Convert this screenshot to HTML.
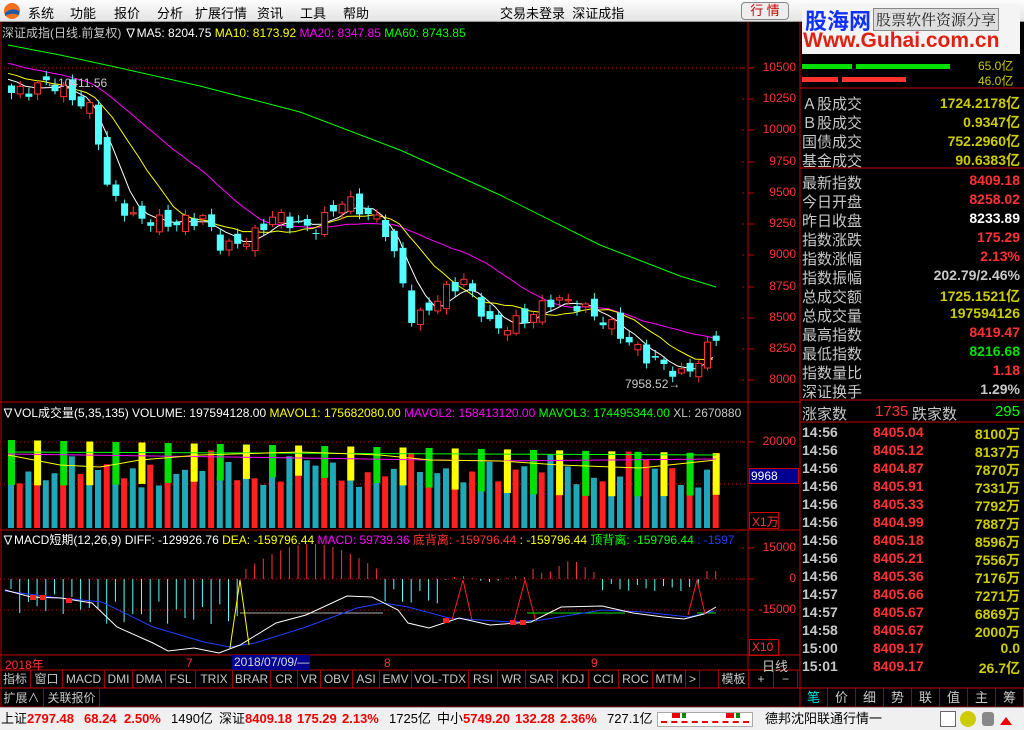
<!DOCTYPE html>
<html><head><meta charset="utf-8">
<style>
*{margin:0;padding:0;box-sizing:border-box}
body{width:1024px;height:730px;background:#000;overflow:hidden;position:relative;font-family:"Liberation Sans","Noto Sans CJK SC",sans-serif;font-size:12px;color:#ddd}
.a{position:absolute;white-space:nowrap}
#menu{left:0;top:0;width:1024px;height:22px;background:linear-gradient(#fdfdfd,#e4e4e4);border-bottom:1px solid #999;color:#000;font-size:13px}
#menu span{position:absolute;top:3px}
.r{color:#ff3232}.y{color:#ffff00}.m{color:#ff00ff}.g{color:#00ff00}.w{color:#fff}.c{color:#c8c8c8}.yy{color:#cccc00}.gg{color:#00e000}
.rp{font-size:15px;left:802px;width:220px}
.rp b{font-weight:normal;position:absolute;right:2px}
.tab{position:absolute;top:670px;height:18px;border-right:1px solid #a00000;color:#c8c8c8;font-size:12px;text-align:center;line-height:18px}
#sb span{position:absolute;top:0}
#sb b{color:#e00}
</style></head><body>
<div class="a" id="menu">
<svg style="position:absolute;left:3px;top:2px" width="18" height="18"><circle cx="9" cy="9" r="8" fill="#f07020"/><path d="M2 11 Q9 5 16 9 L16 13 Q9 10 2 14Z" fill="#1a5aa8"/></svg>
<span style="left:28px">系统</span><span style="left:70px">功能</span><span style="left:114px">报价</span><span style="left:157px">分析</span><span style="left:195px">扩展行情</span><span style="left:257px">资讯</span><span style="left:300px">工具</span><span style="left:343px">帮助</span>
<span style="left:500px">交易未登录&nbsp;&nbsp;深证成指</span>
<span style="left:741px;top:2px;width:48px;height:18px;border:1px solid #888;border-radius:4px;background:#eee;color:#c00;text-align:center;line-height:16px">行 情</span>
</div>
<!-- watermark -->
<div class="a" style="left:802px;top:4px;width:218px;height:50px;background:#f4f4f4"></div>
<div class="a" style="left:805px;top:4px;font-size:22px;font-weight:bold;color:#1030ff;font-family:'Noto Sans CJK SC',sans-serif">股海网</div>
<div class="a" style="left:873px;top:8px;font-size:15px;color:#222;font-family:'Noto Serif CJK SC',serif;background:#ddd;border:1px solid #888;padding:0 2px">股票软件资源分享</div>
<div class="a" style="left:803px;top:29px;font-size:21px;font-weight:bold;color:#e02010">Www.Guhai.com.cn</div>

<svg class="a" style="left:0;top:22px" width="1024" height="708" id="sv"></svg>

<div class="a c" style="left:2px;top:24px;font-size:12px">深证成指(日线.前复权) <span class="w">∇MA5: 8204.75</span> <span class="y">MA10: 8173.92</span> <span class="m">MA20: 8347.85</span> <span class="g">MA60: 8743.85</span></div>
<div class="a c" style="left:46px;top:76px;font-size:12px">←10411.56</div>
<div class="a c" style="left:625px;top:377px;font-size:12px">7958.52→</div>
<div class="a" style="left:2px;top:404px;font-size:12px;width:745px;overflow:hidden"><span class="w">∇VOL成交量(5,35,135) VOLUME: 197594128.00</span> <span class="y">MAVOL1: 175682080.00</span> <span class="m">MAVOL2: 158413120.00</span> <span class="g">MAVOL3: 174495344.00</span> <span class="c">XL: 2670880</span></div>
<div class="a" style="left:2px;top:531px;font-size:12px;width:745px;overflow:hidden"><span class="w">∇MACD短期(12,26,9) DIFF: -129926.76</span> <span class="y">DEA: -159796.44</span> <span class="m">MACD: 59739.36</span> <span class="r">底背离: -159796.44</span> <span class="y">: -159796.44</span> <span class="g">顶背离: -159796.44</span> <span style="color:#2040ff">: -1597</span></div>
<div class="a r" style="left:752px;top:60px;width:44px;text-align:right;line-height:15px;font-size:12px">
<div style="position:absolute;top:0;right:0">10500</div><div style="position:absolute;top:31px;right:0">10250</div><div style="position:absolute;top:62px;right:0">10000</div><div style="position:absolute;top:94px;right:0">9750</div><div style="position:absolute;top:125px;right:0">9500</div><div style="position:absolute;top:156px;right:0">9250</div><div style="position:absolute;top:187px;right:0">9000</div><div style="position:absolute;top:219px;right:0">8750</div><div style="position:absolute;top:250px;right:0">8500</div><div style="position:absolute;top:281px;right:0">8250</div><div style="position:absolute;top:312px;right:0">8000</div>
<div style="position:absolute;top:374px;right:0">20000</div>
<div style="position:absolute;top:480px;right:0">15000</div><div style="position:absolute;top:511px;right:0">0</div><div style="position:absolute;top:542px;right:0">-15000</div>
</div>
<div class="a" style="left:749px;top:468px;width:50px;height:16px;background:#000090;border:1px solid #c00;color:#fff;font-size:12px;line-height:14px;padding-left:1px">9968</div>
<div class="a r" style="left:749px;top:512px;width:30px;height:17px;border:1px solid #c00;font-size:12px;padding-left:2px">X1万</div>
<div class="a r" style="left:749px;top:639px;width:30px;height:17px;border:1px solid #c00;font-size:12px;padding-left:2px">X10</div>
<div class="a r" style="left:5px;top:656px">2018年</div>
<div class="a r" style="left:186px;top:656px">7</div>
<div class="a" style="left:232px;top:655px;width:78px;height:15px;background:#000090;color:#ddd;padding-left:2px">2018/07/09/—</div>
<div class="a r" style="left:384px;top:656px">8</div>
<div class="a r" style="left:591px;top:656px">9</div>
<div class="a c" style="left:762px;top:656px;font-size:13px">日线</div>
<div id="tabs"></div>
<div class="tab" style="left:0;top:689px;width:44px">扩展∧</div>
<div class="tab" style="left:44px;top:689px;width:56px">关联报价</div>
<div class="a" style="left:802px;top:64px;width:50px;height:5px;background:#00e000"></div>
<div class="a" style="left:856px;top:64px;width:94px;height:5px;background:#00e000"></div>
<div class="a" style="left:802px;top:77px;width:36px;height:5px;background:#ff3232"></div>
<div class="a" style="left:842px;top:77px;width:64px;height:5px;background:#ff3232"></div>
<div class="a yy" style="left:978px;top:57px;font-size:12px">65.0亿</div>
<div class="a yy" style="left:978px;top:72px;font-size:12px">46.0亿</div>
<div id="rp"></div>
<div class="a c" style="left:802px;top:403px;font-size:15px;width:220px">涨家数<span class="r" style="position:absolute;left:73px">1735</span><span style="position:absolute;left:110px">跌家数</span><span class="g" style="position:absolute;right:2px">295</span></div>
<div id="ticks"></div>
<div id="btabs"></div>
<div class="a" id="sb" style="left:0;top:707px;width:1024px;height:23px;background:#f0f0f0;border-top:1px solid #aaa;color:#000;font-size:13px;line-height:22px">
<span style="left:1px">上证<b>2797.48</b></span><span style="left:84px"><b>68.24</b></span><span style="left:124px"><b>2.50%</b></span><span style="left:171px">1490亿</span>
<span style="left:219px">深证<b>8409.18</b></span><span style="left:297px"><b>175.29</b></span><span style="left:342px"><b>2.13%</b></span><span style="left:389px">1725亿</span>
<span style="left:437px">中小<b>5749.20</b></span><span style="left:515px"><b>132.28</b></span><span style="left:560px"><b>2.36%</b></span><span style="left:607px">727.1亿</span>
<span style="left:657px;top:4px;width:96px;height:15px;border:1px solid #aaa;background:#fff"></span>
<span style="left:672px;top:5px;width:8px;height:5px;background:#e00"></span><span style="left:682px;top:5px;width:4px;height:5px;background:#080"></span>
<span style="left:726px;top:5px;width:8px;height:5px;background:#e00"></span><span style="left:736px;top:5px;width:4px;height:5px;background:#080"></span>
<span style="left:661px;top:13px;width:88px;height:3px;border-top:2px dashed #e00"></span>
<span style="left:765px">德邦沈阳联通行情一</span>
<span style="left:940px;top:3px;width:16px;height:16px;border:1px solid #666;background:#fff"></span>
<span style="left:960px;top:3px;width:16px;height:16px;border-radius:8px;background:#cc0"></span>
<span style="left:982px;top:4px;width:12px;height:14px;background:#888;border-radius:3px"></span>
<span style="left:1000px;top:3px;width:0;height:0;border:6px solid transparent;border-bottom:8px solid #e00"></span>
</div>
<script>
var sv=document.getElementById('sv'),h='';
function L(x1,y1,x2,y2,c,d){h+='<line x1="'+x1+'" y1="'+(y1-22)+'" x2="'+x2+'" y2="'+(y2-22)+'" stroke="'+c+'"'+(d?' stroke-dasharray="1,3"':'')+'/>';}
function R(x,y,w,hh,f,s){h+='<rect x="'+x+'" y="'+(y-22)+'" width="'+w+'" height="'+hh+'" fill="'+f+'"'+(s?' stroke="'+s+'"':'')+'/>';}
function P(pts,c){h+='<polyline fill="none" stroke="'+c+'" points="'+pts.map(function(p){return p[0]+','+(p[1]-22)}).join(' ')+'"/>';}
var RD='#c00000';
L(748,22,748,670,RD);L(800,22,800,707,RD);L(0,402,800,402,RD);L(0,530,800,530,RD);L(0,655,800,655,RD);L(0,670,800,670,RD);L(0,688,800,688,RD);L(0,707,1024,707,RD);
L(1,22,1,707,RD);
L(0,68,748,68,RD,1);L(0,442,748,442,RD,1);L(0,484,748,484,RD,1);L(0,579,748,579,RD,1);L(0,610,748,610,RD,1);
[68,99,130,162,193,224,255,287,318,349,380,442,548,579,610].forEach(function(y){L(748,y,754,y,RD);L(742,y,744,y,RD);});
L(800,88,1024,88,RD);L(800,168,1024,168,RD);L(800,400,1024,400,RD);L(800,422,1024,422,RD);L(800,688,1024,688,RD);
var kp=[[8,10300],[30,10330],[45,10400],[62,10300],[90,10150],[105,9500],[130,9300],[170,9250],[200,9300],[220,9050],[250,9150],[270,9320],[310,9200],[340,9450],[380,9250],[395,8900],[410,8450],[440,8700],[460,8800],[490,8400],[520,8480],[550,8650],[575,8600],[610,8420],[640,8200],[680,8030],[700,8200],[716,8400]];
function interp(x){for(var i=1;i<kp.length;i++)if(x<=kp[i][0]){var a=kp[i-1],b=kp[i],t=(x-a[0])/(b[0]-a[0]);return a[1]+t*(b[1]-a[1]);}return kp[kp.length-1][1];}
function Y(p){return 68+(10500-p)*0.1248;}
var N=82,cl=[],xs=[];
for(var i=0;i<N;i++){var x=8+i*8.7;xs.push(x);cl.push(interp(x)+Math.sin(i*2.3)*55);}
var hist=[];for(var i=0;i<20;i++)hist.push(10700-i*15);var all=hist.concat(cl);
function ma(n){var o=[];for(var i=0;i<N;i++){var s=0,k=0;for(var j=0;j<n;j++){var idx=i+20-j;if(idx>=0){s+=all[idx];k++;}}o.push([xs[i],Y(s/k)]);}return o;}
P([[8,45],[60,55],[120,68],[200,86],[300,112],[400,150],[500,195],[600,245],[680,276],[716,287]],'#00ff00');
P(ma(20),'#ff00ff');P(ma(10),'#ffff00');P(ma(5),'#ffffff');
for(var i=0;i<N;i++){var o=i?cl[i-1]+Math.cos(i*1.7)*60:cl[0]+60,c=cl[i],x=xs[i];var hi=Math.max(o,c)+15+Math.abs(Math.sin(i))*35,lo=Math.min(o,c)-15-Math.abs(Math.cos(i))*35;
var up=c>o,col=up?'#ff3232':'#54ffff';L(x+3.5,Y(hi),x+3.5,Y(lo),col);var t=Y(Math.max(o,c)),hh=Math.max(1,Y(Math.min(o,c))-t);
if(up){R(x+0.5,t,6,hh,'#000','#ff3232');}else R(x,t,7,hh,'#54ffff');}
for(var i=0;i<N;i++){var x=xs[i],v=455+Math.abs(Math.sin(i*1.37))*25+Math.sin(i*0.5)*8;var s=i%5,col=(s==1||s==3)?'#ff2020':'#20a8b8';
R(x,v,6,528-v,col);if(i%3==0){var t=440+Math.abs(Math.sin(i*2.1))*30;R(x,t,7,30+Math.abs(Math.cos(i))*15,(i%2)?'#ffff00':'#00e000');}}
P([[8,452],[716,455]],'#00ff00');P([[8,454],[300,458],[500,461],[716,459]],'#ff00ff');
P([[8,455],[60,465],[100,467],[140,460],[200,455],[300,452],[380,455],[430,460],[500,461],[560,465],[640,468],[716,460]],'#ffff00');
for(var i=0;i<N;i++){var x=xs[i]+3,v;if(x<238)v=-(10+Math.abs(Math.sin(i*1.3))*25+(x>90?10:0));else if(x<385)v=30*Math.sin((x-238)/147*Math.PI)+5;else if(x<440)v=-(10+Math.abs(Math.sin(i))*15);else if(x<530)v=3*Math.sin(i);else if(x<600)v=12+Math.sin(i)*6;else if(x<700)v=-(4+Math.abs(Math.sin(i))*8);else v=8;
L(x,579,x,579-v,v>0?'#ff3232':'#54ffff');}
P([[240,613],[383,613]],'#b0b0b0');P([[527,613],[625,613]],'#00e000');P([[697,613],[716,613]],'#00e000');
P([[5,591],[51,597],[102,602],[153,627],[204,642],[230,647],[255,643],[306,627],[357,608],[383,603],[408,607],[449,618],[510,622],[541,620],[602,610],[643,612],[689,617],[714,611]],'#2040ff');
P([[5,590],[31,597],[61,598],[92,603],[117,627],[153,643],[168,651],[194,648],[219,653],[240,645],[276,623],[306,615],[347,596],[372,597],[398,610],[408,623],[429,628],[459,618],[490,625],[531,622],[561,607],[602,606],[633,613],[663,617],[684,619],[704,614],[716,607]],'#ffffff');
P([[230,648],[240,580],[249,645]],'#ffff00');P([[452,620],[463,580],[472,620]],'#ff2020');P([[514,622],[525,580],[536,622]],'#ff2020');P([[688,615],[697,580],[705,614]],'#ff2020');
[[30,595],[40,595],[66,598],[443,618],[510,620],[520,620]].forEach(function(p){R(p[0],p[1],6,5,'#ff2020');});
sv.innerHTML=h;
var T=[['指标',0,31],['窗口',31,63],['MACD',63,105],['DMI',105,133],['DMA',133,166],['FSL',166,196],['TRIX',196,233],['BRAR',233,271],['CR',271,298],['VR',298,321],['OBV',321,353],['ASI',353,380],['EMV',380,412],['VOL-TDX',412,469],['RSI',469,498],['WR',498,526],['SAR',526,558],['KDJ',558,589],['CCI',589,619],['ROC',619,653],['MTM',653,686],['>',686,700],['',700,719],['模板',719,749],['+',749,774],['−',774,798]],s='';
T.forEach(function(t){s+='<div class="tab" style="left:'+t[1]+'px;width:'+(t[2]-t[1])+'px">'+t[0]+'</div>';});
document.getElementById('tabs').innerHTML=s;
var rows=[['Ａ股成交','1724.2178亿','yy',93],['Ｂ股成交','0.9347亿','yy',112],['国债成交','752.2960亿','yy',131],['基金成交','90.6383亿','yy',150],
['最新指数','8409.18','r',172],['今日开盘','8258.02','r',191],['昨日收盘','8233.89','w',210],['指数涨跌','175.29','r',229],['指数涨幅','2.13%','r',248],['指数振幅','202.79/2.46%','c',267],['总成交额','1725.1521亿','yy',286],['总成交量','197594126','yy',305],['最高指数','8419.47','r',324],['最低指数','8216.68','gg',343],['指数量比','1.18','r',362],['深证换手','1.29%','c',381]];
s='';rows.forEach(function(r){s+='<div class="a rp c" style="top:'+r[3]+'px">'+r[0]+'<b class="'+r[2]+'" style="font-weight:bold;font-size:14px">'+r[1]+'</b></div>';});
document.getElementById('rp').innerHTML=s;
var tk=[['14:56','8405.04','8100万'],['14:56','8405.12','8137万'],['14:56','8404.87','7870万'],['14:56','8405.91','7331万'],['14:56','8405.33','7792万'],['14:56','8404.99','7887万'],['14:56','8405.18','8596万'],['14:56','8405.21','7556万'],['14:56','8405.36','7176万'],['14:57','8405.66','7271万'],['14:57','8405.67','6869万'],['14:58','8405.67','2000万'],['15:00','8409.17','0.0'],['15:01','8409.17','26.7亿']];
s='';tk.forEach(function(t,i){var y=424+i*18;s+='<div class="a c" style="left:802px;top:'+y+'px;font-size:14px;font-weight:bold">'+t[0]+'</div><div class="a r" style="left:873px;top:'+y+'px;font-size:14px;font-weight:bold">'+t[1]+'</div><div class="a yy" style="right:4px;top:'+y+'px;font-size:14px;font-weight:bold">'+t[2]+'</div>';});
document.getElementById('ticks').innerHTML=s;
var bt=['笔','价','细','势','联','值','主','筹'];s='';
bt.forEach(function(b,i){s+='<div class="a" style="left:'+(800+i*28)+'px;top:688px;width:28px;height:19px;border-right:1px solid #a00000;text-align:center;font-size:13px;line-height:19px;color:'+(i?'#c8c8c8':'#00e0e0')+'">'+b+'</div>';});
document.getElementById('btabs').innerHTML=s;
</script>
</body></html>
